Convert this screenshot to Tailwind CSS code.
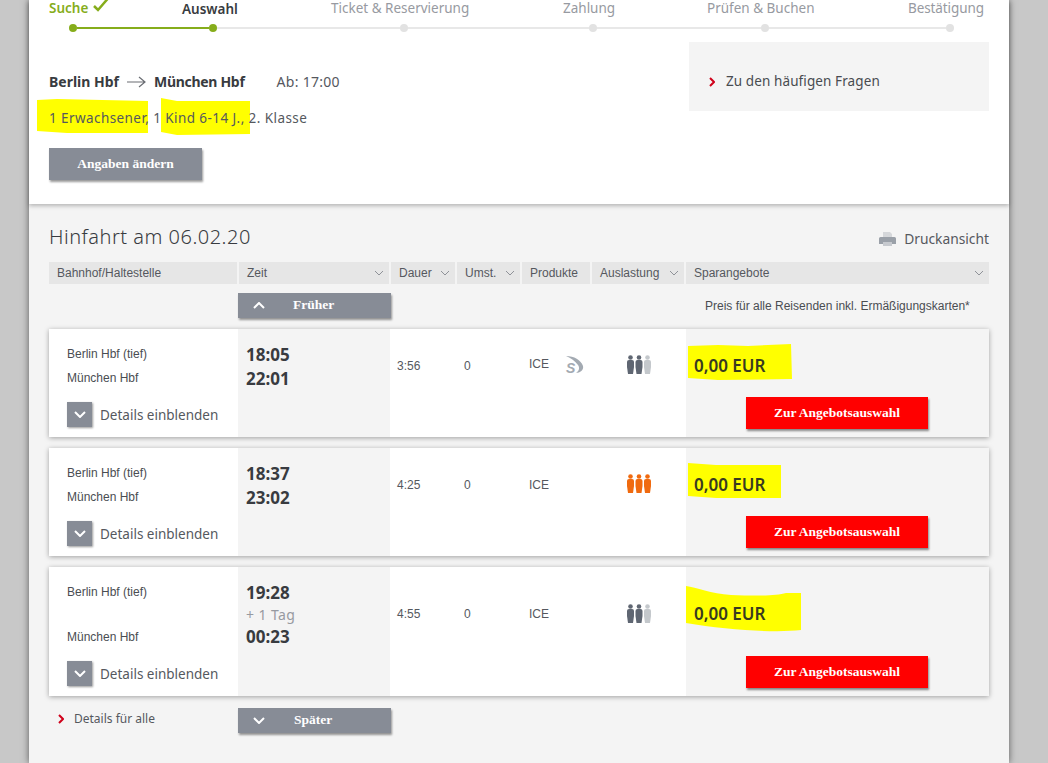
<!DOCTYPE html>
<html lang="de">
<head>
  <meta charset="utf-8">
  <title>Hinfahrt am 06.02.20</title>
  <script src="https://cdn.jsdelivr.net/npm/@tailwindcss/browser@4"></script>
</head>
<body class="bg-[#c8c8c8] h-[763px] overflow-hidden font-['Noto_Sans',sans-serif] text-[#383b40]">
  <main class="ml-[29px] w-[980px] h-[763px] bg-[#f4f4f4] shadow-[0_0_7px_rgba(0,0,0,0.55)]">
    <!-- Booking summary -->
    <section class="relative z-10 h-[204px] bg-white px-5 shadow-[0_2px_4px_rgba(0,0,0,0.25)]">
      <div class="flex h-[16px] text-[13.500px] leading-[16px] text-[#979aa1] whitespace-nowrap">
        <span class="flex w-[133px] items-center gap-[5px] font-semibold text-[#86ad1b]">Suche
          <svg width="16" height="14" viewBox="0 0 16 14" class="-translate-y-[3px]"><path d="M1 8l4 4L14.500 1" fill="none" stroke="#86ad1b" stroke-width="2.500"/></svg>
        </span>
        <span class="w-[149px] pt-[1px] font-semibold text-[#383b40]">Auswahl</span>
        <span class="w-[232px]">Ticket &amp; Reservierung</span>
        <span class="w-[144px]">Zahlung</span>
        <span class="w-[201px]">Prüfen &amp; Buchen</span>
        <span class="tracking-[-0.1px]">Bestätigung</span>
      </div>
      <div class="ml-[20px] mt-[8px] flex h-[8px] w-[885px] items-center">
        <i class="size-[8px] rounded-full bg-[#86ad1b]"></i>
        <i class="h-[2px] w-[132px] bg-[#86ad1b]"></i>
        <i class="size-[8px] rounded-full bg-[#86ad1b]"></i>
        <i class="h-[2px] w-[183px] bg-[#e8e8e8]"></i>
        <i class="size-[8px] rounded-full bg-[#e2e2e2]"></i>
        <i class="h-[2px] w-[181px] bg-[#e8e8e8]"></i>
        <i class="size-[8px] rounded-full bg-[#e2e2e2]"></i>
        <i class="h-[2px] w-[164px] bg-[#e8e8e8]"></i>
        <i class="size-[8px] rounded-full bg-[#e2e2e2]"></i>
        <i class="h-[2px] w-[177px] bg-[#e8e8e8]"></i>
        <i class="size-[8px] rounded-full bg-[#e2e2e2]"></i>
      </div>
      <div class="mt-[10px] flex justify-between">
        <div>
          <div class="mt-[30px] flex h-[20px] items-center text-[14px] leading-[20px] whitespace-nowrap">
            <b class="font-bold">Berlin Hbf</b>
            <svg width="20" height="12" viewBox="0 0 20 12" class="ml-[8px] mr-[7px]"><path d="M0 6h18M12 1l6 5-6 5" fill="none" stroke="#6a6d73" stroke-width="1.200"/></svg>
            <b class="font-bold tracking-[-0.3px]">München Hbf</b>
            <span class="ml-[32px] tracking-[0.3px] text-[#55585e]">Ab: 17:00</span>
          </div>
          <div class="relative mt-[16px] h-[20px] text-[13.500px] leading-[20px] tracking-[0.42px] whitespace-nowrap text-[#55585e]">
            <svg width="220" height="40" viewBox="0 0 220 40" class="absolute -left-[12px] -top-[11px]">
              <path d="M0 3 L20 2 L111 4 L111 36 L30 36 L0 34Z M124 1 L140 4 L213 4 L213 37 L140 38 L124 35Z" fill="#ffff00"/>
            </svg>
            <span class="relative">1 Erwachsener, 1 Kind 6-14 J., 2. Klasse</span>
          </div>
          <button class="mt-[20px] block h-[32px] w-[153px] bg-[#878c96] font-['Liberation_Serif',serif] text-[13.500px] font-bold text-white shadow-[1px_2px_2px_rgba(0,0,0,0.4)]">Angaben ändern</button>
        </div>
        <a class="flex h-[69px] w-[300px] items-center gap-[11px] bg-[#f4f4f4] pl-[20px] pt-[10px] text-[13.500px] tracking-[0.1px] text-[#484b50]">
          <svg width="6" height="10" viewBox="0 0 6 10"><path d="M1 1l4 4-4 4" fill="none" stroke="#d0021b" stroke-width="2"/></svg>
          Zu den häufigen Fragen
        </a>
      </div>
    </section>

    <!-- Connections -->
    <section class="px-5">
      <div class="flex h-[32px] mt-[17px] items-center justify-between">
        <h1 class="text-[20px] font-light tracking-[0.5px] text-[#383b40]">Hinfahrt am 06.02.20</h1>
        <span class="mt-[5px] flex items-center gap-[8px] text-[13.800px] text-[#55585e]">
          <svg width="17" height="15" viewBox="0 0 17 15"><path d="M4 0h7l2 2v3H4z" fill="#d5d7da"/><path d="M1.500 5h14a1.500 1.500 0 0 1 1.500 1.500V12H0V6.500A1.500 1.500 0 0 1 1.500 5z" fill="#9aa0a8"/><path d="M4 10h9v4H4z" fill="#c6c9ce"/></svg>
          Druckansicht
        </span>
      </div>

      <div class="mt-[9px] grid h-[22px] grid-cols-[188px_150px_64px_63px_68px_92px_1fr] gap-x-[2px] font-['Liberation_Sans',sans-serif] text-[12px] leading-[22px] text-[#55585e]">
        <div class="bg-[#e6e6e6] pl-[8px]">Bahnhof/Haltestelle</div>
        <div class="flex items-center justify-between bg-[#e6e6e6] pl-[8px] pr-[5px]">Zeit<svg width="10" height="6" viewBox="0 0 10 6"><path d="M1 1l4 4 4-4" fill="none" stroke="#8f9298"/></svg></div>
        <div class="flex items-center justify-between bg-[#e6e6e6] pl-[8px] pr-[5px]">Dauer<svg width="10" height="6" viewBox="0 0 10 6"><path d="M1 1l4 4 4-4" fill="none" stroke="#8f9298"/></svg></div>
        <div class="flex items-center justify-between bg-[#e6e6e6] pl-[8px] pr-[5px]">Umst.<svg width="10" height="6" viewBox="0 0 10 6"><path d="M1 1l4 4 4-4" fill="none" stroke="#8f9298"/></svg></div>
        <div class="bg-[#e6e6e6] pl-[8px]">Produkte</div>
        <div class="flex items-center justify-between bg-[#e6e6e6] pl-[8px] pr-[5px]">Auslastung<svg width="10" height="6" viewBox="0 0 10 6"><path d="M1 1l4 4 4-4" fill="none" stroke="#8f9298"/></svg></div>
        <div class="flex items-center justify-between bg-[#e6e6e6] pl-[8px] pr-[5px]">Sparangebote<svg width="10" height="6" viewBox="0 0 10 6"><path d="M1 1l4 4 4-4" fill="none" stroke="#8f9298"/></svg></div>
      </div>

      <div class="mt-[9px] flex h-[25px] items-center">
        <button class="ml-[189px] flex h-[25px] w-[153px] items-center bg-[#878c96] pl-[15px] font-['Liberation_Serif',serif] text-[13.500px] font-bold text-white shadow-[1px_2px_2px_rgba(0,0,0,0.4)]">
          <svg width="12" height="7" viewBox="0 0 12 7"><path d="M1 6l5-5 5 5" fill="none" stroke="#fff" stroke-width="2"/></svg>
          <span class="ml-[28px]">Früher</span>
        </button>
        <span class="ml-[314px] font-['Liberation_Sans',sans-serif] text-[12px] text-[#4a4d52]">Preis für alle Reisenden inkl. Ermäßigungskarten*</span>
      </div>

      <!-- Row 1 -->
      <article class="mt-[11px] grid h-[108px] grid-cols-[189px_152px_67px_70px_38px_61px_60px_303px] bg-white shadow-[0_1px_5px_rgba(0,0,0,0.35)]">
        <div class="pl-[18px] pt-[16px] font-['Liberation_Sans',sans-serif] text-[12px] leading-[18px] text-[#4a4d52]">
          <p>Berlin Hbf (tief)</p>
          <p class="mt-[6px]">München Hbf</p>
          <div class="mt-[15px] flex items-center gap-[8px] font-['Noto_Sans',sans-serif] text-[13.500px] text-[#55585e]">
            <span class="flex size-[25px] items-center justify-center bg-[#878c96] shadow-[1px_1px_2px_rgba(0,0,0,0.4)]"><svg width="12" height="7" viewBox="0 0 12 7"><path d="M1 1l5 5 5-5" fill="none" stroke="#fff" stroke-width="2"/></svg></span>
            Details einblenden
          </div>
        </div>
        <div class="bg-[#f4f4f4] pl-[8px] pt-[14px] text-[17px] font-bold leading-[24px] text-[#383b40]">
          <p>18:05</p>
          <p>22:01</p>
        </div>
        <div class="pl-[7px] pt-[27px] font-['Liberation_Sans',sans-serif] text-[12px] leading-[20px] text-[#55585e]">3:56</div>
        <div class="pl-[7px] pt-[27px] font-['Liberation_Sans',sans-serif] text-[12px] leading-[20px] text-[#55585e]">0</div>
        <div class="pl-[2px] pt-[25px] font-['Liberation_Sans',sans-serif] text-[12px] leading-[20px] text-[#55585e]">ICE</div>
        <div class="pt-[27px]">
          <div class="relative h-[18px] w-[20px] font-['Liberation_Sans',sans-serif] text-[14px] font-bold italic leading-[18px] text-[#a3aab2]">
            <svg width="18" height="18" viewBox="0 0 18 18" class="absolute left-[1px] top-0"><path d="M0 0C8 0 15 4 17 10 18 14 14 17 10 17 13 15 14 12 12 9 9 5 5 2 0 0z" fill="#a3aab2"/></svg>
            <span class="absolute left-[1px] top-[3px]">S</span>
          </div>
        </div>
        <div class="pl-[1px] pt-[26px]">
          <svg width="24" height="19" viewBox="0 0 24 19"><g fill="#5f6672"><circle cx="3.500" cy="2.500" r="2.300"/><path d="M0 7a2 2 0 0 1 2-2h3a2 2 0 0 1 2 2v5l-1 7H1L0 12z"/><circle cx="12" cy="2.500" r="2.300"/><path d="M8.500 7a2 2 0 0 1 2-2h3a2 2 0 0 1 2 2v5l-1 7h-5l-1-7z"/></g><g fill="#c4c8cc"><circle cx="20.500" cy="2.500" r="2.300"/><path d="M17 7a2 2 0 0 1 2-2h3a2 2 0 0 1 2 2v5l-1 7h-5l-1-7z"/></g></svg>
        </div>
        <div class="relative flex flex-col justify-between bg-[#f4f4f4] pb-[8px] pl-[8px] pt-[25px]">
          <svg width="104" height="36" viewBox="0 0 104 36" class="absolute left-[2px] top-[15px]"><path d="M0 2 L30 1 L60 2 L103 0 L104 35 L30 36 L0 34Z" fill="#ffff00"/></svg>
          <p class="relative text-[17px] font-semibold leading-[24px] text-[#383b20]">0,00 EUR</p>
          <button class="ml-[52px] h-[32px] w-[182px] bg-[#ff0000] font-['Liberation_Serif',serif] text-[13.500px] font-bold text-white shadow-[1px_2px_2px_rgba(0,0,0,0.45)]">Zur Angebotsauswahl</button>
        </div>
      </article>

      <!-- Row 2 -->
      <article class="mt-[11px] grid h-[108px] grid-cols-[189px_152px_67px_70px_38px_61px_60px_303px] bg-white shadow-[0_1px_5px_rgba(0,0,0,0.35)]">
        <div class="pl-[18px] pt-[16px] font-['Liberation_Sans',sans-serif] text-[12px] leading-[18px] text-[#4a4d52]">
          <p>Berlin Hbf (tief)</p>
          <p class="mt-[6px]">München Hbf</p>
          <div class="mt-[15px] flex items-center gap-[8px] font-['Noto_Sans',sans-serif] text-[13.500px] text-[#55585e]">
            <span class="flex size-[25px] items-center justify-center bg-[#878c96] shadow-[1px_1px_2px_rgba(0,0,0,0.4)]"><svg width="12" height="7" viewBox="0 0 12 7"><path d="M1 1l5 5 5-5" fill="none" stroke="#fff" stroke-width="2"/></svg></span>
            Details einblenden
          </div>
        </div>
        <div class="bg-[#f4f4f4] pl-[8px] pt-[14px] text-[17px] font-bold leading-[24px] text-[#383b40]">
          <p>18:37</p>
          <p>23:02</p>
        </div>
        <div class="pl-[7px] pt-[27px] font-['Liberation_Sans',sans-serif] text-[12px] leading-[20px] text-[#55585e]">4:25</div>
        <div class="pl-[7px] pt-[27px] font-['Liberation_Sans',sans-serif] text-[12px] leading-[20px] text-[#55585e]">0</div>
        <div class="pl-[2px] pt-[27px] font-['Liberation_Sans',sans-serif] text-[12px] leading-[20px] text-[#55585e]">ICE</div>
        <div></div>
        <div class="pl-[1px] pt-[26px]">
          <svg width="24" height="19" viewBox="0 0 24 19"><g fill="#f06a0f"><circle cx="3.500" cy="2.500" r="2.300"/><path d="M0 7a2 2 0 0 1 2-2h3a2 2 0 0 1 2 2v5l-1 7H1L0 12z"/><circle cx="12" cy="2.500" r="2.300"/><path d="M8.500 7a2 2 0 0 1 2-2h3a2 2 0 0 1 2 2v5l-1 7h-5l-1-7z"/><circle cx="20.500" cy="2.500" r="2.300"/><path d="M17 7a2 2 0 0 1 2-2h3a2 2 0 0 1 2 2v5l-1 7h-5l-1-7z"/></g></svg>
        </div>
        <div class="relative flex flex-col justify-between bg-[#f4f4f4] pb-[8px] pl-[8px] pt-[25px]">
          <svg width="96" height="36" viewBox="0 0 96 36" class="absolute left-0 top-[15px]"><path d="M2 0 L30 2 L95 2 L95 35 L30 35 L2 33Z" fill="#ffff00"/></svg>
          <p class="relative text-[17px] font-semibold leading-[24px] text-[#383b20]">0,00 EUR</p>
          <button class="ml-[52px] h-[32px] w-[182px] bg-[#ff0000] font-['Liberation_Serif',serif] text-[13.500px] font-bold text-white shadow-[1px_2px_2px_rgba(0,0,0,0.45)]">Zur Angebotsauswahl</button>
        </div>
      </article>

      <!-- Row 3 -->
      <article class="mt-[11px] grid h-[129px] grid-cols-[189px_152px_67px_70px_38px_61px_60px_303px] bg-white shadow-[0_1px_5px_rgba(0,0,0,0.35)]">
        <div class="pl-[18px] pt-[16px] font-['Liberation_Sans',sans-serif] text-[12px] leading-[18px] text-[#4a4d52]">
          <p>Berlin Hbf (tief)</p>
          <p class="mt-[27px]">München Hbf</p>
          <div class="mt-[15px] flex items-center gap-[8px] font-['Noto_Sans',sans-serif] text-[13.500px] text-[#55585e]">
            <span class="flex size-[25px] items-center justify-center bg-[#878c96] shadow-[1px_1px_2px_rgba(0,0,0,0.4)]"><svg width="12" height="7" viewBox="0 0 12 7"><path d="M1 1l5 5 5-5" fill="none" stroke="#fff" stroke-width="2"/></svg></span>
            Details einblenden
          </div>
        </div>
        <div class="bg-[#f4f4f4] pl-[8px] pt-[14px] text-[17px] font-bold leading-[24px] text-[#383b40]">
          <p>19:28</p>
          <p class="-my-[1px] text-[14px] font-normal leading-[22px] tracking-[0.4px] text-[#979aa1]">+ 1 Tag</p>
          <p>00:23</p>
        </div>
        <div class="pl-[7px] pt-[37px] font-['Liberation_Sans',sans-serif] text-[12px] leading-[20px] text-[#55585e]">4:55</div>
        <div class="pl-[7px] pt-[37px] font-['Liberation_Sans',sans-serif] text-[12px] leading-[20px] text-[#55585e]">0</div>
        <div class="pl-[2px] pt-[37px] font-['Liberation_Sans',sans-serif] text-[12px] leading-[20px] text-[#55585e]">ICE</div>
        <div></div>
        <div class="pl-[1px] pt-[37px]">
          <svg width="24" height="19" viewBox="0 0 24 19"><g fill="#5f6672"><circle cx="3.500" cy="2.500" r="2.300"/><path d="M0 7a2 2 0 0 1 2-2h3a2 2 0 0 1 2 2v5l-1 7H1L0 12z"/><circle cx="12" cy="2.500" r="2.300"/><path d="M8.500 7a2 2 0 0 1 2-2h3a2 2 0 0 1 2 2v5l-1 7h-5l-1-7z"/></g><g fill="#c4c8cc"><circle cx="20.500" cy="2.500" r="2.300"/><path d="M17 7a2 2 0 0 1 2-2h3a2 2 0 0 1 2 2v5l-1 7h-5l-1-7z"/></g></svg>
        </div>
        <div class="relative flex flex-col justify-between bg-[#f4f4f4] pb-[8px] pl-[8px] pt-[35px]">
          <svg width="115" height="46" viewBox="0 0 115 46" class="absolute left-0 top-[19px]"><path d="M0 0 C10 1 25 8 45 9 C70 10 90 10 100 7 L115 7 L115 44 C90 47 40 44 0 37Z" fill="#ffff00"/></svg>
          <p class="relative text-[17px] font-semibold leading-[24px] text-[#383b20]">0,00 EUR</p>
          <button class="ml-[52px] h-[32px] w-[182px] bg-[#ff0000] font-['Liberation_Serif',serif] text-[13.500px] font-bold text-white shadow-[1px_2px_2px_rgba(0,0,0,0.45)]">Zur Angebotsauswahl</button>
        </div>
      </article>

      <div class="mt-[12px] flex h-[25px]">
        <a class="flex w-[189px] items-center gap-[10px] pb-[3px] pl-[9px] text-[12px] text-[#55585e]">
          <svg width="6" height="10" viewBox="0 0 6 10"><path d="M1 1l4 4-4 4" fill="none" stroke="#d0021b" stroke-width="2"/></svg>
          Details für alle
        </a>
        <button class="flex h-[25px] w-[153px] items-center bg-[#878c96] pl-[15px] font-['Liberation_Serif',serif] text-[13.500px] font-bold text-white shadow-[1px_2px_2px_rgba(0,0,0,0.4)]">
          <svg width="12" height="7" viewBox="0 0 12 7"><path d="M1 1l5 5 5-5" fill="none" stroke="#fff" stroke-width="2"/></svg>
          <span class="ml-[29px]">Später</span>
        </button>
      </div>
    </section>
  </main>
</body>
</html>
